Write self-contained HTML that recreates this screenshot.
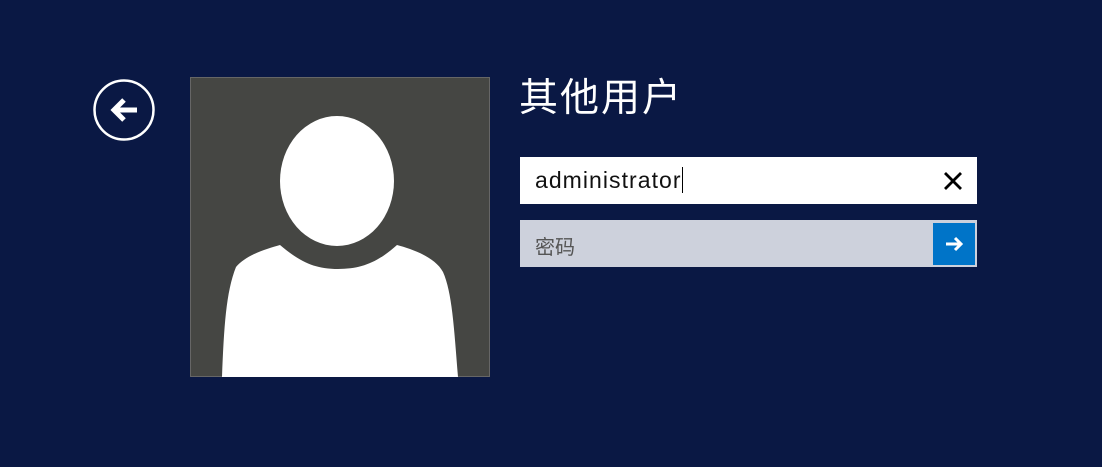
<!DOCTYPE html><html><head><meta charset="utf-8"><style>
body{margin:0;width:1102px;height:467px;background:#0a1844;overflow:hidden;position:relative;font-family:"Liberation Sans","Noto Sans CJK SC",sans-serif}
.a{position:absolute}
</style></head><body>
<svg class="a" style="left:92px;top:78px" width="66" height="66" viewBox="0 0 66 66"><circle cx="32" cy="32" r="29.5" fill="none" stroke="#fff" stroke-width="2.5"/><path d="M45 32H23M32 22L22 32L32 42" fill="none" stroke="#fff" stroke-width="5" stroke-linejoin="miter"/></svg>
<svg class="a" style="left:190px;top:77px" width="300" height="300" viewBox="0 0 300 300"><rect x="0.5" y="0.5" width="299" height="299" fill="#454643" stroke="#666"/><ellipse cx="147" cy="104" rx="57" ry="65" fill="#fff"/><path d="M32 300C34 250 36 215 46 190C56 178 76 172 90 168C110 185 125 192 148 192C172 192 188 185 207 168C222 172 245 180 253 195C262 215 264 250 268 300Z" fill="#fff"/></svg>
<div class="a" style="left:519px;top:67px;color:#fff;font-size:39px;letter-spacing:2px">其他用户</div>
<div class="a" style="left:520px;top:157px;width:457px;height:47px;background:#fff"></div>
<div class="a" style="left:535px;top:167px;font-size:23px;letter-spacing:1.05px;color:#111">administrator<span style="display:inline-block;width:1px;height:26px;background:#000;vertical-align:-5px"></span></div>
<svg class="a" style="left:942px;top:170px" width="22" height="22" viewBox="0 0 22 22"><path d="M3 3L19 19M19 3L3 19" stroke="#000" stroke-width="2.8"/></svg>
<div class="a" style="left:520px;top:220px;width:457px;height:47px;background:#cdd1dc"></div>
<div class="a" style="left:535px;top:231px;font-size:20px;color:#555">密码</div>
<div class="a" style="left:933px;top:223px;width:42px;height:42px;background:#0074c8"></div>
<svg class="a" style="left:943px;top:233px" width="22" height="22" viewBox="0 0 22 22"><path d="M3 11H18M12 5L18 11L12 17" fill="none" stroke="#fff" stroke-width="3"/></svg>
</body></html>
